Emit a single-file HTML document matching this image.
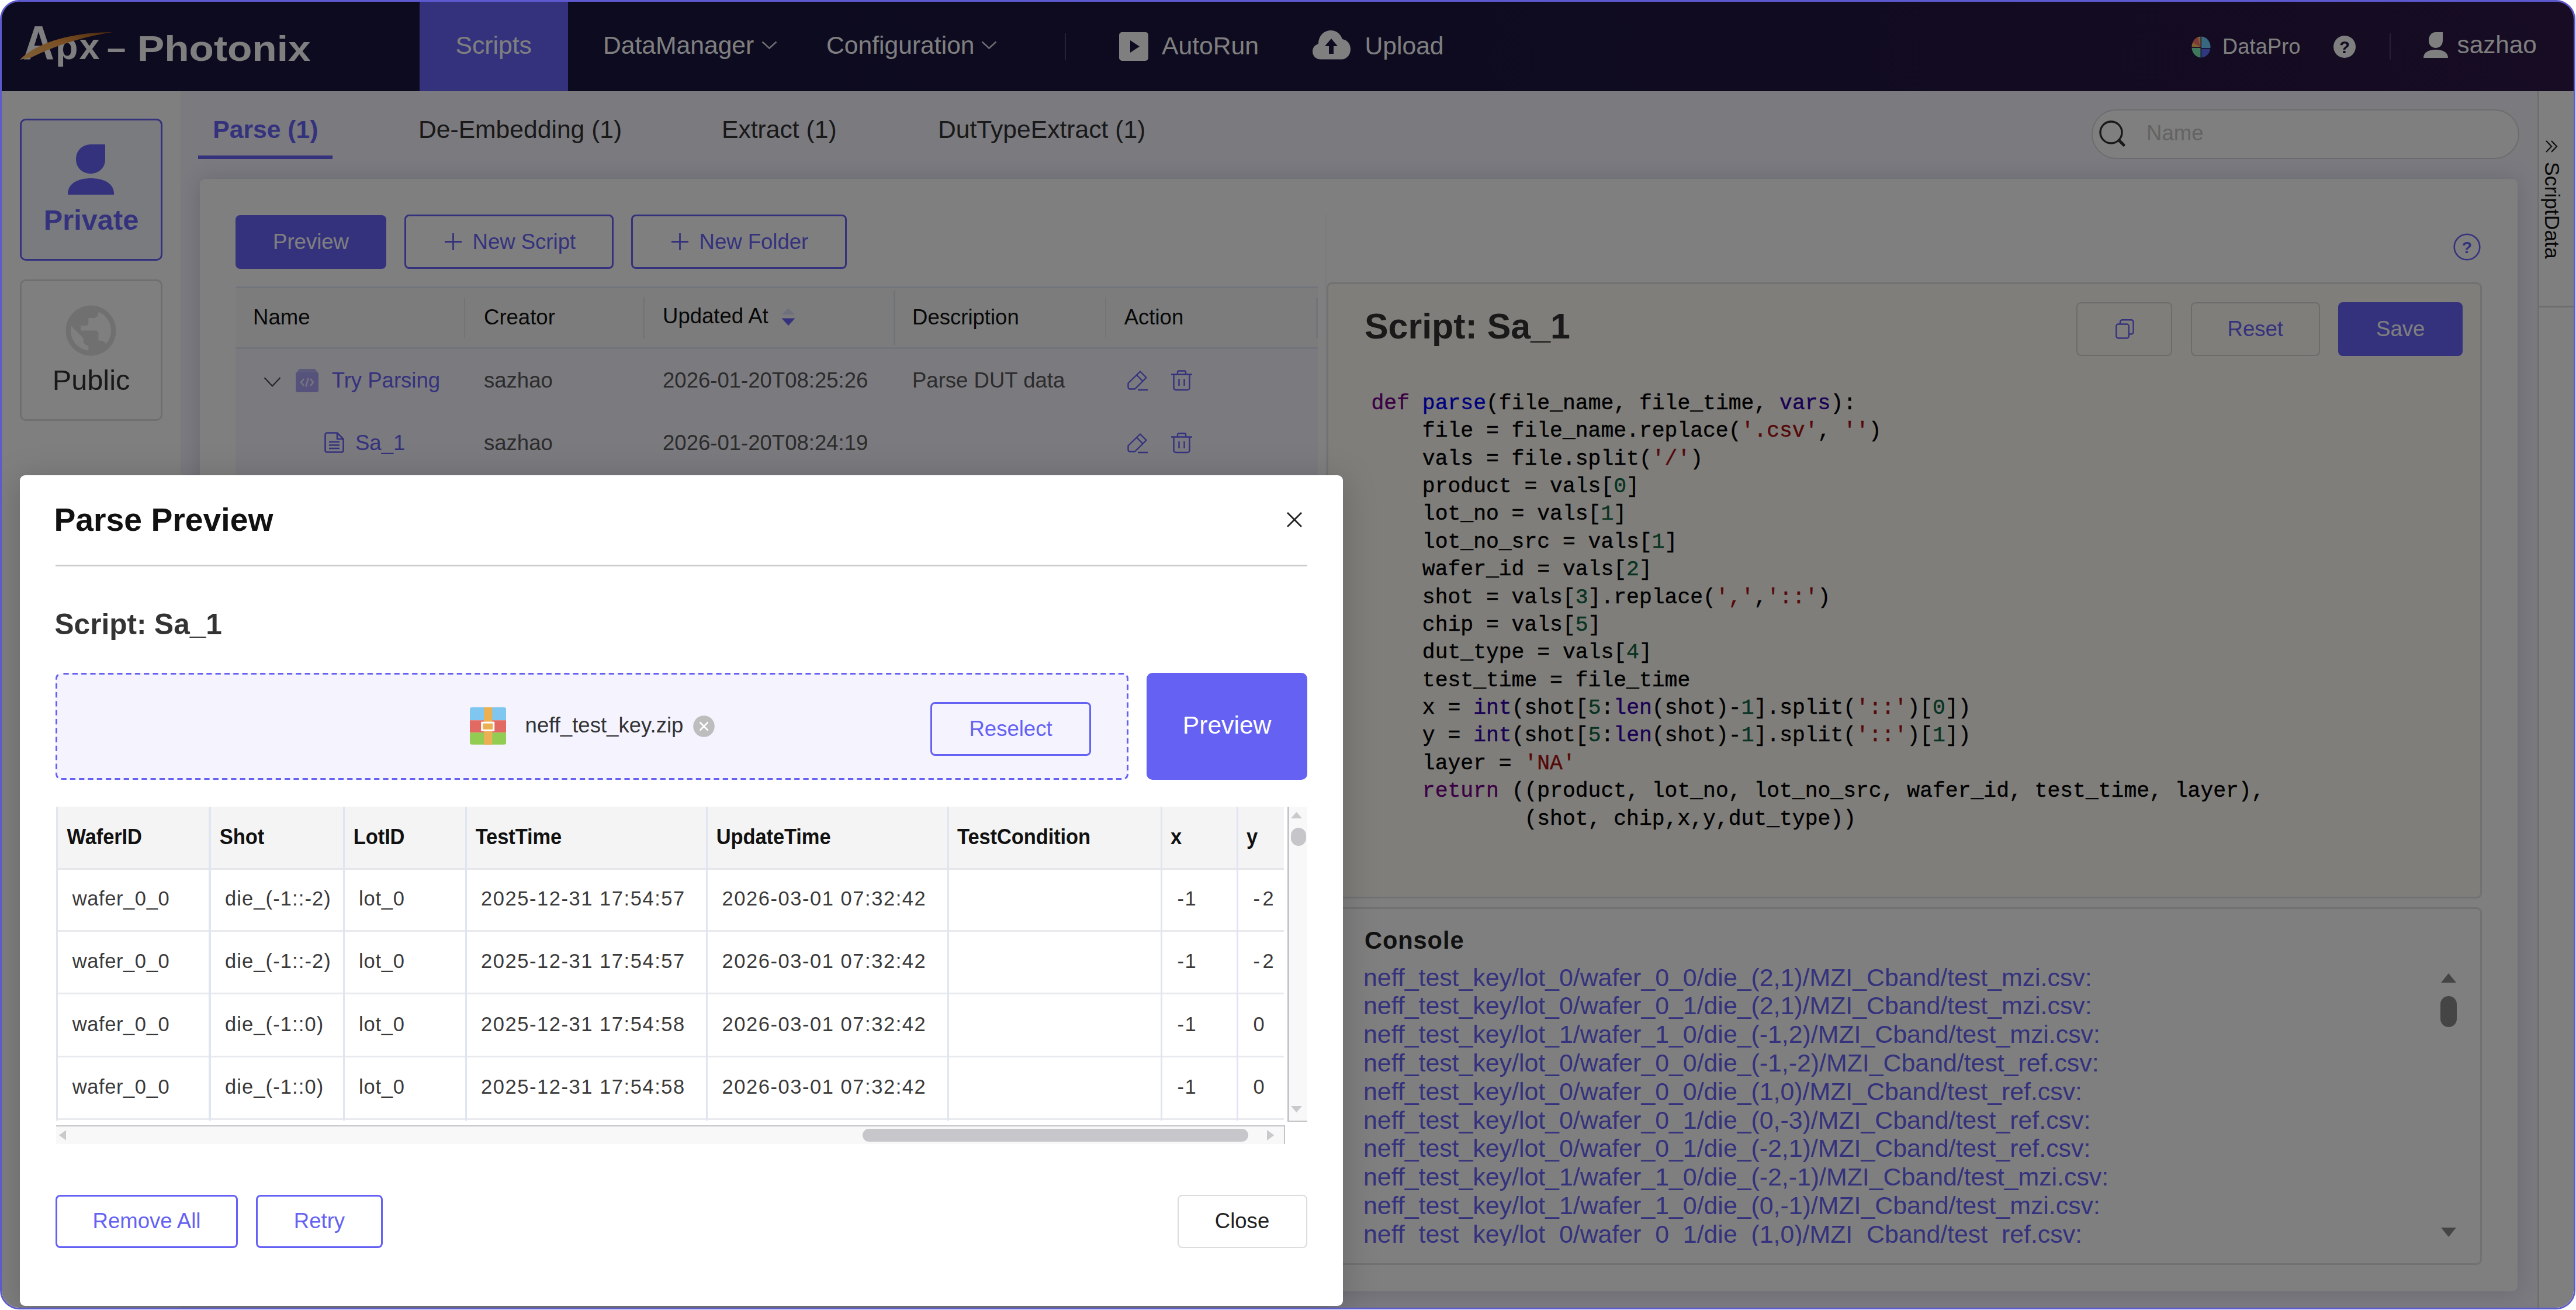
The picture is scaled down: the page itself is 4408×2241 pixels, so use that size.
<!DOCTYPE html>
<html lang="en"><head><meta charset="utf-8"><title>Apx - Photonix | Scripts | Parse Preview</title>
<style>
html,body{margin:0;padding:0;background:#fff;}
body{width:4408px;height:2241px;overflow:hidden;position:relative;font-family:'Liberation Sans', sans-serif;}
#frame{position:absolute;left:0;top:0;width:4406.5px;height:2240px;box-sizing:border-box;border:3px solid #5d59cf;border-radius:33px;overflow:hidden;background:#808080;}
#page,#modal{position:absolute;left:-3px;top:-3px;width:4408px;height:2241px;}
#mask{position:absolute;left:-3px;top:-3px;width:4408px;height:2241px;background:rgba(0,0,0,0.5);}
#page div,#page svg,#modal div,#modal svg{position:absolute;box-sizing:border-box;}
.t{white-space:nowrap;margin:0;}
</style></head><body>
<div id="frame">
<div id="page">
<div style="left:0.00px;top:0.00px;width:4408.00px;height:156.00px;background:linear-gradient(90deg,#1a1640 0%,#1c1642 55%,#2e1846 100%);"></div>
<div class="t" style="left:39.00px;top:25.14px;font-size:81.2px;line-height:97.44px;color:#fff;font-weight:700;font-family:'Liberation Sans', sans-serif;letter-spacing:0;transform:scaleX(0.92);transform-origin:0 0;">A</div>
<div class="t" style="left:95.00px;top:42.44px;font-size:62.93px;line-height:75.52px;color:#fff;font-weight:700;font-family:'Liberation Sans', sans-serif;letter-spacing:2px;">px</div>
<div class="t" style="left:183.00px;top:46.60px;font-size:58px;line-height:69.60px;color:#fff;font-weight:700;font-family:'Liberation Sans', sans-serif;">–</div>
<div class="t" style="left:235.00px;top:45.82px;font-size:62px;line-height:74.40px;color:#fff;font-weight:700;font-family:'Liberation Sans', sans-serif;transform:scaleX(1.118);transform-origin:0 0;">Photonix</div>
<svg style="left:30.00px;top:50.00px;" width="170.00" height="56.00" viewBox="0 0 170 56"><defs><linearGradient id="sw" x1="0" y1="1" x2="1" y2="0"><stop offset="0" stop-color="#ffc070"/><stop offset="0.55" stop-color="#f5a048"/><stop offset="1" stop-color="#9a5218"/></linearGradient></defs><path d="M4 52 C 36 20, 100 5, 163 5 C 108 13, 58 31, 22 49 Z" fill="url(#sw)"/></svg>
<div style="left:718.00px;top:0.00px;width:254.00px;height:156.00px;background:#6a64fb;"></div>
<div class="t" style="left:779.60px;top:52.25px;font-size:42.63px;line-height:51.16px;color:#fff;font-weight:400;font-family:'Liberation Sans', sans-serif;">Scripts</div>
<div class="t" style="left:1032.00px;top:52.25px;font-size:42.63px;line-height:51.16px;color:#fff;font-weight:400;font-family:'Liberation Sans', sans-serif;">DataManager</div>
<svg style="left:1303.00px;top:70.00px;" width="27.00" height="15.00" viewBox="0 0 27 15"><path d="M1.5 1.5 L13.5 12.5 L25.5 1.5" fill="none" stroke="#d8d8e0" stroke-width="2.6"/></svg>
<div class="t" style="left:1414.00px;top:52.25px;font-size:42.63px;line-height:51.16px;color:#fff;font-weight:400;font-family:'Liberation Sans', sans-serif;">Configuration</div>
<svg style="left:1679.00px;top:70.00px;" width="27.00" height="15.00" viewBox="0 0 27 15"><path d="M1.5 1.5 L13.5 12.5 L25.5 1.5" fill="none" stroke="#d8d8e0" stroke-width="2.6"/></svg>
<div style="left:1821.50px;top:56.50px;width:2.50px;height:45.00px;background:#4a4668;"></div>
<svg style="left:1915.00px;top:55.00px;" width="50.00" height="49.00" viewBox="0 0 50 49"><rect x="0" y="0" width="50" height="49" rx="5" fill="#fff"/><path d="M19 14 L35 24.5 L19 35 Z" fill="#1c1642"/></svg>
<div class="t" style="left:1988.00px;top:52.65px;font-size:42.63px;line-height:51.16px;color:#fff;font-weight:400;font-family:'Liberation Sans', sans-serif;">AutoRun</div>
<svg style="left:2246.00px;top:52.00px;" width="65.00" height="50.00" viewBox="0 0 65 50"><path d="M14 49.5 C 5 49.5, 0 43, 0 36 C 0 29, 4.5 24.5, 10 23 C 10 9, 20 0, 31 0 C 41 0, 48 6, 51 15 C 59 16, 65 23, 65 32 C 65 42, 58 49.5, 50 49.5 Z" fill="#fff"/><path d="M32 14 L43 27 L36 27 L36 40 L28 40 L28 27 L21 27 Z" fill="#1c1642"/></svg>
<div class="t" style="left:2335.50px;top:52.65px;font-size:42.63px;line-height:51.16px;color:#fff;font-weight:400;font-family:'Liberation Sans', sans-serif;">Upload</div>
<svg style="left:3750.00px;top:62.00px;" width="33.00" height="37.00" viewBox="0 0 33 37"><clipPath id="dp"><ellipse cx="16.5" cy="18.5" rx="16" ry="18"/></clipPath><g clip-path="url(#dp)"><rect x="0" y="0" width="15.5" height="18.5" fill="#ffc060"/><path d="M0 0 L10 0 L15.5 18.5 L0 9 Z" fill="#ff7070"/><rect x="17" y="0" width="16" height="20" fill="#70d0ff"/><rect x="0" y="20" width="15.5" height="17" fill="#80f0b8"/><rect x="17" y="21.5" width="16" height="16" fill="#5a70ff"/></g></svg>
<div class="t" style="left:3803.00px;top:57.63px;font-size:36px;line-height:43.20px;color:#fff;font-weight:400;font-family:'Liberation Sans', sans-serif;letter-spacing:0.25px;">DataPro</div>
<svg style="left:3993.00px;top:61.00px;" width="38.00" height="38.00" viewBox="0 0 38 38"><circle cx="19" cy="19" r="19" fill="#fff"/></svg>
<div class="t" style="left:4012.00px;transform:translateX(-50%);top:62.88px;font-size:29.5px;line-height:35.40px;color:#1e1842;font-weight:700;font-family:'Liberation Sans', sans-serif;">?</div>
<div style="left:4088.50px;top:56.50px;width:2.50px;height:45.00px;background:#4a4668;"></div>
<svg style="left:4147.00px;top:55.00px;" width="42.00" height="44.00" viewBox="0 0 42 44"><path d="M21 0 L33 0 L33 14 C 33 22, 28 27, 21 27 C 14 27, 9 22, 9 14 C 9 6, 14 0, 21 0 Z" fill="#fff"/><path d="M0 44 C 0 35, 8 30, 21 30 C 34 30, 42 35, 42 44 Z" fill="#fff"/></svg>
<div class="t" style="left:4204.50px;top:52.36px;font-size:42.3px;line-height:50.76px;color:#fff;font-weight:400;font-family:'Liberation Sans', sans-serif;">sazhao</div>
<div style="left:0.00px;top:156.00px;width:4408.00px;height:2090.00px;background:#f5f4ff;"></div>
<div style="left:0.00px;top:156.00px;width:308.50px;height:2090.00px;background:#fff;"></div>
<div style="left:34.00px;top:202.50px;width:243.50px;height:243.00px;border:3px solid #6a64fb;border-radius:10px;background:#f5f6ff;"></div>
<svg style="left:116.00px;top:247.00px;" width="80.00" height="86.00" viewBox="0 0 80 86"><path d="M39 0 L64 0 L64 26 C 64 40, 53 50, 39 50 C 25 50, 14 40, 14 25 C 14 11, 25 0, 39 0 Z" fill="#6a64fb"/><path d="M0 86 L0 82 C 2 66, 18 58, 39.5 58 C 61 58, 77 66, 79 82 L79 86 Z" fill="#6a64fb"/></svg>
<div class="t" style="left:156.00px;transform:translateX(-50%);top:346.59px;font-size:48.72px;line-height:58.46px;color:#6a64fb;font-weight:700;font-family:'Liberation Sans', sans-serif;">Private</div>
<div style="left:34.00px;top:478.00px;width:243.50px;height:242.00px;border:3px solid #dedede;border-radius:10px;background:#fff;"></div>
<svg style="left:104.40px;top:514.40px;" width="103.20" height="103.20" viewBox="0 0 24 24"><path fill="#e0e0e0" d="M12 2C6.48 2 2 6.48 2 12s4.48 10 10 10 10-4.48 10-10S17.52 2 12 2zm-1 17.93c-3.95-.49-7-3.85-7-7.93 0-.62.08-1.21.21-1.79L9 15v1c0 1.1.9 2 2 2v1.93zm6.9-2.54c-.26-.81-1-1.39-1.9-1.39h-1v-3c0-.55-.45-1-1-1H8v-2h2c.55 0 1-.45 1-1V7h2c1.1 0 2-.9 2-2v-.41c2.93 1.19 5 4.06 5 7.41 0 2.08-.8 3.97-2.1 5.39z"/></svg>
<div class="t" style="left:156.00px;transform:translateX(-50%);top:620.89px;font-size:48.72px;line-height:58.46px;color:#333;font-weight:400;font-family:'Liberation Sans', sans-serif;">Public</div>
<div style="left:4342.00px;top:156.00px;width:70.00px;height:2090.00px;background:#fff;"></div>
<div style="left:4342.00px;top:156.00px;width:3.00px;height:2090.00px;background:#dcdcdc;"></div>
<div style="left:4345.00px;top:522.50px;width:60.00px;height:3.00px;background:#dcdcdc;"></div>
<svg style="left:4355.00px;top:239.00px;" width="23.00" height="23.00" viewBox="0 0 23 23"><path d="M2 2 L11 11.5 L2 21 M11 2 L20 11.5 L11 21" fill="none" stroke="#222" stroke-width="2.2"/></svg>
<div class="t" style="left:4349px;top:277px;font-size:35.5px;line-height:36px;color:#111;font-family:'Liberation Sans', sans-serif;writing-mode:vertical-rl;">ScriptData</div>
<div class="t" style="left:364.30px;top:196.35px;font-size:42.63px;line-height:51.16px;color:#6a64fb;font-weight:700;font-family:'Liberation Sans', sans-serif;">Parse (1)</div>
<div style="left:339.00px;top:265.80px;width:229.50px;height:6.20px;background:#6a64fb;"></div>
<div class="t" style="left:716.00px;top:195.65px;font-size:42.63px;line-height:51.16px;color:#333;font-weight:400;font-family:'Liberation Sans', sans-serif;">De-Embedding (1)</div>
<div class="t" style="left:1235.00px;top:195.65px;font-size:42.63px;line-height:51.16px;color:#333;font-weight:400;font-family:'Liberation Sans', sans-serif;">Extract (1)</div>
<div class="t" style="left:1605.00px;top:195.65px;font-size:42.63px;line-height:51.16px;color:#333;font-weight:400;font-family:'Liberation Sans', sans-serif;">DutTypeExtract (1)</div>
<div style="left:3579.00px;top:186.50px;width:732.00px;height:85.00px;border:2.5px solid #d9d9d9;border-radius:43px;background:#fff;"></div>
<svg style="left:3592.00px;top:206.00px;" width="46.00" height="46.00" viewBox="0 0 46 46"><circle cx="20.5" cy="20.5" r="18.5" fill="none" stroke="#333" stroke-width="3.4"/><path d="M34 34 L42 42" stroke="#333" stroke-width="5" stroke-linecap="round"/></svg>
<div class="t" style="left:3673.00px;top:206.41px;font-size:36.54px;line-height:43.85px;color:#c6c6c6;font-weight:400;font-family:'Liberation Sans', sans-serif;">Name</div>
<div style="left:342.00px;top:306.00px;width:3966.00px;height:1903.00px;background:#fff;border-radius:9px;box-shadow:0 0 36px rgba(40,40,80,0.16);"></div>
<div style="left:403.00px;top:368.30px;width:258.00px;height:91.40px;background:#6a64fb;border-radius:8px;"></div>
<div class="t" style="left:532.00px;transform:translateX(-50%);top:391.91px;font-size:36.54px;line-height:43.85px;color:#fff;font-weight:400;font-family:'Liberation Sans', sans-serif;">Preview</div>
<div style="left:692.00px;top:367.00px;width:358.00px;height:93.00px;border:3px solid #6a64fb;border-radius:8px;background:#fff;"></div>
<svg style="left:761.00px;top:399.00px;" width="29.00" height="29.00" viewBox="0 0 29 29"><path d="M14.5 0 V29 M0 14.5 H29" stroke="#6a64fb" stroke-width="2.8"/></svg>
<div class="t" style="left:808.50px;top:391.91px;font-size:36.54px;line-height:43.85px;color:#6a64fb;font-weight:400;font-family:'Liberation Sans', sans-serif;">New Script</div>
<div style="left:1080.00px;top:367.00px;width:368.50px;height:93.00px;border:3px solid #6a64fb;border-radius:8px;background:#fff;"></div>
<svg style="left:1149.00px;top:399.00px;" width="29.00" height="29.00" viewBox="0 0 29 29"><path d="M14.5 0 V29 M0 14.5 H29" stroke="#6a64fb" stroke-width="2.8"/></svg>
<div class="t" style="left:1196.50px;top:391.91px;font-size:36.54px;line-height:43.85px;color:#6a64fb;font-weight:400;font-family:'Liberation Sans', sans-serif;">New Folder</div>
<div style="left:403.00px;top:490.00px;width:1851.50px;height:106.50px;background:#f9f9f9;border-top:3.2px solid #e3ebf7;border-bottom:3.2px solid #e3ebf7;"></div>
<div style="left:403.00px;top:596.50px;width:1851.50px;height:216.00px;background:#f6f5ff;"></div>
<div style="left:793.80px;top:509.00px;width:2.60px;height:70.00px;background:#e4e8f0;"></div>
<div style="left:1100.30px;top:509.00px;width:2.60px;height:70.00px;background:#e4e8f0;"></div>
<div style="left:1528.80px;top:497.00px;width:2.80px;height:93.00px;background:#e0e5ee;"></div>
<div style="left:1890.80px;top:509.00px;width:2.60px;height:70.00px;background:#e4e8f0;"></div>
<div style="left:2252.30px;top:509.00px;width:2.60px;height:70.00px;background:#e4e8f0;"></div>
<div class="t" style="left:433.00px;top:521.01px;font-size:36.54px;line-height:43.85px;color:#111;font-weight:400;font-family:'Liberation Sans', sans-serif;">Name</div>
<div class="t" style="left:828.00px;top:521.01px;font-size:36.54px;line-height:43.85px;color:#111;font-weight:400;font-family:'Liberation Sans', sans-serif;">Creator</div>
<div class="t" style="left:1134.00px;top:519.01px;font-size:36.54px;line-height:43.85px;color:#111;font-weight:400;font-family:'Liberation Sans', sans-serif;">Updated At</div>
<svg style="left:1336.50px;top:526.50px;" width="24.00" height="30.00" viewBox="0 0 24 30"><path d="M12 0 L23.5 11.5 L0.5 11.5 Z" fill="#dde3fa"/><path d="M12 30 L23.5 17.5 L0.5 17.5 Z" fill="#6a64fb"/></svg>
<div class="t" style="left:1561.00px;top:521.01px;font-size:36.54px;line-height:43.85px;color:#111;font-weight:400;font-family:'Liberation Sans', sans-serif;">Description</div>
<div class="t" style="left:1923.70px;top:521.01px;font-size:36.54px;line-height:43.85px;color:#111;font-weight:400;font-family:'Liberation Sans', sans-serif;">Action</div>
<svg style="left:451.00px;top:644.00px;" width="30.00" height="20.00" viewBox="0 0 30 20"><path d="M1.5 2 L15 16.5 L28.5 2" fill="none" stroke="#4a4a4a" stroke-width="2.2"/></svg>
<svg style="left:506.00px;top:631.00px;" width="39.00" height="40.00" viewBox="0 0 39 40"><path d="M6 0 H33 L39 8 H0 Z" fill="#b8b5f6"/><rect x="0" y="6" width="39" height="34" rx="3" fill="#aaa6f8"/><path d="M14 17 L9 23 L14 29 M25 17 L30 23 L25 29 M21.5 15.5 L17.5 30.5" fill="none" stroke="#f0efff" stroke-width="2.4"/></svg>
<div class="t" style="left:567.70px;top:629.41px;font-size:36.54px;line-height:43.85px;color:#6a64fb;font-weight:400;font-family:'Liberation Sans', sans-serif;">Try Parsing</div>
<div class="t" style="left:828.00px;top:629.41px;font-size:36.54px;line-height:43.85px;color:#595959;font-weight:400;font-family:'Liberation Sans', sans-serif;">sazhao</div>
<div class="t" style="left:1134.00px;top:629.41px;font-size:36.54px;line-height:43.85px;color:#595959;font-weight:400;font-family:'Liberation Sans', sans-serif;">2026-01-20T08:25:26</div>
<div class="t" style="left:1561.00px;top:629.41px;font-size:36.54px;line-height:43.85px;color:#595959;font-weight:400;font-family:'Liberation Sans', sans-serif;">Parse DUT data</div>
<svg style="left:1927.50px;top:633.00px;" width="38.00" height="36.00" viewBox="0 0 38 36"><path d="M23 2.5 L33.5 13 L14 32.5 H5.5 a3 3 0 0 1 -3 -3 V22.5 Z M17 8.5 L27.5 19 M19 34 H36" fill="none" stroke="#6a64fb" stroke-width="2.4" stroke-linejoin="round"/></svg>
<svg style="left:2002.50px;top:633.00px;" width="38.00" height="36.00" viewBox="0 0 38 36"><path d="M1 7.5 H37 M12 7 V3.5 a2 2 0 0 1 2 -2 H24 a2 2 0 0 1 2 2 V7 M5.5 8 V30.5 a3.5 3.5 0 0 0 3.5 3.5 H29 a3.5 3.5 0 0 0 3.5 -3.5 V8 M14.5 15 V27 M23.5 15 V27" fill="none" stroke="#6a64fb" stroke-width="2.4"/></svg>
<svg style="left:555.00px;top:738.50px;" width="34.00" height="36.00" viewBox="0 0 34 36"><path d="M1.5 4.5 a3 3 0 0 1 3 -3 H22 L32.5 12 V31.5 a3 3 0 0 1 -3 3 H4.5 a3 3 0 0 1 -3 -3 Z M22 1.5 V12 H32.5 M8 17 H26 M8 22.5 H26 M8 28 H26" fill="none" stroke="#6a64fb" stroke-width="2.6" stroke-linejoin="round"/></svg>
<div class="t" style="left:608.00px;top:735.91px;font-size:36.54px;line-height:43.85px;color:#6a64fb;font-weight:400;font-family:'Liberation Sans', sans-serif;">Sa_1</div>
<div class="t" style="left:828.00px;top:735.91px;font-size:36.54px;line-height:43.85px;color:#595959;font-weight:400;font-family:'Liberation Sans', sans-serif;">sazhao</div>
<div class="t" style="left:1134.00px;top:735.91px;font-size:36.54px;line-height:43.85px;color:#595959;font-weight:400;font-family:'Liberation Sans', sans-serif;">2026-01-20T08:24:19</div>
<svg style="left:1927.50px;top:740.00px;" width="38.00" height="36.00" viewBox="0 0 38 36"><path d="M23 2.5 L33.5 13 L14 32.5 H5.5 a3 3 0 0 1 -3 -3 V22.5 Z M17 8.5 L27.5 19 M19 34 H36" fill="none" stroke="#6a64fb" stroke-width="2.4" stroke-linejoin="round"/></svg>
<svg style="left:2002.50px;top:740.00px;" width="38.00" height="36.00" viewBox="0 0 38 36"><path d="M1 7.5 H37 M12 7 V3.5 a2 2 0 0 1 2 -2 H24 a2 2 0 0 1 2 2 V7 M5.5 8 V30.5 a3.5 3.5 0 0 0 3.5 3.5 H29 a3.5 3.5 0 0 0 3.5 -3.5 V8 M14.5 15 V27 M23.5 15 V27" fill="none" stroke="#6a64fb" stroke-width="2.4"/></svg>
<div style="left:2267.00px;top:366.00px;width:3.00px;height:1800.00px;background:#f6f8fc;"></div>
<svg style="left:4198.00px;top:399.00px;" width="47.00" height="47.00" viewBox="0 0 47 47"><circle cx="23.5" cy="23.5" r="21.8" fill="none" stroke="#6a64fb" stroke-width="2.6"/></svg>
<div class="t" style="left:4221.50px;transform:translateX(-50%);top:405.60px;font-size:28.42px;line-height:34.10px;color:#6a64fb;font-weight:700;font-family:'Liberation Sans', sans-serif;">?</div>
<div style="left:2270.00px;top:483.00px;width:1976.50px;height:1053.50px;border:3px solid #e2e2e2;border-radius:9px;background:#fffdf6;"></div>
<div class="t" style="left:2335.00px;top:522.36px;font-size:60.9px;line-height:73.08px;color:#333;font-weight:700;font-family:'Liberation Sans', sans-serif;">Script: Sa_1</div>
<div style="left:3553.00px;top:517.00px;width:163.50px;height:92.00px;border:2.6px solid #d9d9d9;border-radius:8px;"></div>
<svg style="left:3620.00px;top:546.00px;" width="32.00" height="34.00" viewBox="0 0 32 34"><rect x="1.3" y="8.5" width="21.5" height="24" rx="3.5" fill="none" stroke="#6a64fb" stroke-width="2.4"/><path d="M8 8 V4.8 a3.5 3.5 0 0 1 3.5 -3.5 H27 a3.5 3.5 0 0 1 3.5 3.5 V22 a3.5 3.5 0 0 1 -3.5 3.5 H23.5" fill="none" stroke="#6a64fb" stroke-width="2.4"/></svg>
<div style="left:3748.50px;top:517.00px;width:221.50px;height:92.00px;border:2.6px solid #d9d9d9;border-radius:8px;"></div>
<div class="t" style="left:3859.30px;transform:translateX(-50%);top:541.41px;font-size:36.54px;line-height:43.85px;color:#6a64fb;font-weight:400;font-family:'Liberation Sans', sans-serif;">Reset</div>
<div style="left:4001.00px;top:517.00px;width:213.00px;height:92.00px;background:#6a64fb;border-radius:8px;"></div>
<div class="t" style="left:4107.70px;transform:translateX(-50%);top:541.41px;font-size:36.54px;line-height:43.85px;color:#fff;font-weight:400;font-family:'Liberation Sans', sans-serif;">Save</div>
<div class="t" style="left:2346.50px;top:668.77px;font-size:36.39px;line-height:43.67px;color:#000;font-weight:400;font-family:'Liberation Mono', monospace;white-space:pre;-webkit-text-stroke:0.45px;"><span style="color:#770088">def</span> <span style="color:#0000ff">parse</span>(file_name, file_time, <span style="color:#3300aa">vars</span>):</div>
<div class="t" style="left:2346.50px;top:716.16px;font-size:36.39px;line-height:43.67px;color:#000;font-weight:400;font-family:'Liberation Mono', monospace;white-space:pre;-webkit-text-stroke:0.45px;">    file = file_name.replace(<span style="color:#aa1111">'.csv'</span>, <span style="color:#aa1111">''</span>)</div>
<div class="t" style="left:2346.50px;top:763.55px;font-size:36.39px;line-height:43.67px;color:#000;font-weight:400;font-family:'Liberation Mono', monospace;white-space:pre;-webkit-text-stroke:0.45px;">    vals = file.split(<span style="color:#aa1111">'/'</span>)</div>
<div class="t" style="left:2346.50px;top:810.94px;font-size:36.39px;line-height:43.67px;color:#000;font-weight:400;font-family:'Liberation Mono', monospace;white-space:pre;-webkit-text-stroke:0.45px;">    product = vals[<span style="color:#116644">0</span>]</div>
<div class="t" style="left:2346.50px;top:858.33px;font-size:36.39px;line-height:43.67px;color:#000;font-weight:400;font-family:'Liberation Mono', monospace;white-space:pre;-webkit-text-stroke:0.45px;">    lot_no = vals[<span style="color:#116644">1</span>]</div>
<div class="t" style="left:2346.50px;top:905.72px;font-size:36.39px;line-height:43.67px;color:#000;font-weight:400;font-family:'Liberation Mono', monospace;white-space:pre;-webkit-text-stroke:0.45px;">    lot_no_src = vals[<span style="color:#116644">1</span>]</div>
<div class="t" style="left:2346.50px;top:953.11px;font-size:36.39px;line-height:43.67px;color:#000;font-weight:400;font-family:'Liberation Mono', monospace;white-space:pre;-webkit-text-stroke:0.45px;">    wafer_id = vals[<span style="color:#116644">2</span>]</div>
<div class="t" style="left:2346.50px;top:1000.50px;font-size:36.39px;line-height:43.67px;color:#000;font-weight:400;font-family:'Liberation Mono', monospace;white-space:pre;-webkit-text-stroke:0.45px;">    shot = vals[<span style="color:#116644">3</span>].replace(<span style="color:#aa1111">','</span>,<span style="color:#aa1111">'::'</span>)</div>
<div class="t" style="left:2346.50px;top:1047.89px;font-size:36.39px;line-height:43.67px;color:#000;font-weight:400;font-family:'Liberation Mono', monospace;white-space:pre;-webkit-text-stroke:0.45px;">    chip = vals[<span style="color:#116644">5</span>]</div>
<div class="t" style="left:2346.50px;top:1095.28px;font-size:36.39px;line-height:43.67px;color:#000;font-weight:400;font-family:'Liberation Mono', monospace;white-space:pre;-webkit-text-stroke:0.45px;">    dut_type = vals[<span style="color:#116644">4</span>]</div>
<div class="t" style="left:2346.50px;top:1142.67px;font-size:36.39px;line-height:43.67px;color:#000;font-weight:400;font-family:'Liberation Mono', monospace;white-space:pre;-webkit-text-stroke:0.45px;">    test_time = file_time</div>
<div class="t" style="left:2346.50px;top:1190.06px;font-size:36.39px;line-height:43.67px;color:#000;font-weight:400;font-family:'Liberation Mono', monospace;white-space:pre;-webkit-text-stroke:0.45px;">    x = <span style="color:#3300aa">int</span>(shot[<span style="color:#116644">5</span>:<span style="color:#3300aa">len</span>(shot)-<span style="color:#116644">1</span>].split(<span style="color:#aa1111">'::'</span>)[<span style="color:#116644">0</span>])</div>
<div class="t" style="left:2346.50px;top:1237.45px;font-size:36.39px;line-height:43.67px;color:#000;font-weight:400;font-family:'Liberation Mono', monospace;white-space:pre;-webkit-text-stroke:0.45px;">    y = <span style="color:#3300aa">int</span>(shot[<span style="color:#116644">5</span>:<span style="color:#3300aa">len</span>(shot)-<span style="color:#116644">1</span>].split(<span style="color:#aa1111">'::'</span>)[<span style="color:#116644">1</span>])</div>
<div class="t" style="left:2346.50px;top:1284.84px;font-size:36.39px;line-height:43.67px;color:#000;font-weight:400;font-family:'Liberation Mono', monospace;white-space:pre;-webkit-text-stroke:0.45px;">    layer = <span style="color:#aa1111">'NA'</span></div>
<div class="t" style="left:2346.50px;top:1332.23px;font-size:36.39px;line-height:43.67px;color:#000;font-weight:400;font-family:'Liberation Mono', monospace;white-space:pre;-webkit-text-stroke:0.45px;">    <span style="color:#770088">return</span> ((product, lot_no, lot_no_src, wafer_id, test_time, layer),</div>
<div class="t" style="left:2346.50px;top:1379.62px;font-size:36.39px;line-height:43.67px;color:#000;font-weight:400;font-family:'Liberation Mono', monospace;white-space:pre;-webkit-text-stroke:0.45px;">            (shot, chip,x,y,dut_type))</div>
<div style="left:2270.00px;top:1552.00px;width:1976.50px;height:611.50px;border:3px solid #e2e2e2;border-radius:9px;background:#fff;"></div>
<div class="t" style="left:2335.00px;top:1584.12px;font-size:41.61px;line-height:49.93px;color:#222;font-weight:700;font-family:'Liberation Sans', sans-serif;letter-spacing:0.9px;">Console</div>
<div style="left:2300px;top:1640px;width:1900px;height:491px;overflow:hidden;">
<div class="t" style="left:33.00px;top:6.66px;font-size:42.83px;line-height:51.40px;color:#6a64fb;font-weight:400;font-family:'Liberation Sans', sans-serif;">neff_test_key/lot_0/wafer_0_0/die_(2,1)/MZI_Cband/test_mzi.csv:</div>
<div class="t" style="left:33.00px;top:55.44px;font-size:42.83px;line-height:51.40px;color:#6a64fb;font-weight:400;font-family:'Liberation Sans', sans-serif;">neff_test_key/lot_0/wafer_0_1/die_(2,1)/MZI_Cband/test_mzi.csv:</div>
<div class="t" style="left:33.00px;top:104.22px;font-size:42.83px;line-height:51.40px;color:#6a64fb;font-weight:400;font-family:'Liberation Sans', sans-serif;">neff_test_key/lot_1/wafer_1_0/die_(-1,2)/MZI_Cband/test_mzi.csv:</div>
<div class="t" style="left:33.00px;top:153.00px;font-size:42.83px;line-height:51.40px;color:#6a64fb;font-weight:400;font-family:'Liberation Sans', sans-serif;">neff_test_key/lot_0/wafer_0_0/die_(-1,-2)/MZI_Cband/test_ref.csv:</div>
<div class="t" style="left:33.00px;top:201.78px;font-size:42.83px;line-height:51.40px;color:#6a64fb;font-weight:400;font-family:'Liberation Sans', sans-serif;">neff_test_key/lot_0/wafer_0_0/die_(1,0)/MZI_Cband/test_ref.csv:</div>
<div class="t" style="left:33.00px;top:250.56px;font-size:42.83px;line-height:51.40px;color:#6a64fb;font-weight:400;font-family:'Liberation Sans', sans-serif;">neff_test_key/lot_0/wafer_0_1/die_(0,-3)/MZI_Cband/test_ref.csv:</div>
<div class="t" style="left:33.00px;top:299.34px;font-size:42.83px;line-height:51.40px;color:#6a64fb;font-weight:400;font-family:'Liberation Sans', sans-serif;">neff_test_key/lot_0/wafer_0_1/die_(-2,1)/MZI_Cband/test_ref.csv:</div>
<div class="t" style="left:33.00px;top:348.12px;font-size:42.83px;line-height:51.40px;color:#6a64fb;font-weight:400;font-family:'Liberation Sans', sans-serif;">neff_test_key/lot_1/wafer_1_0/die_(-2,-1)/MZI_Cband/test_mzi.csv:</div>
<div class="t" style="left:33.00px;top:396.90px;font-size:42.83px;line-height:51.40px;color:#6a64fb;font-weight:400;font-family:'Liberation Sans', sans-serif;">neff_test_key/lot_1/wafer_1_0/die_(0,-1)/MZI_Cband/test_mzi.csv:</div>
<div class="t" style="left:33.00px;top:445.68px;font-size:42.83px;line-height:51.40px;color:#6a64fb;font-weight:400;font-family:'Liberation Sans', sans-serif;">neff_test_key/lot_0/wafer_0_1/die_(1,0)/MZI_Cband/test_ref.csv:</div>
</div>
<svg style="left:4176.00px;top:1664.00px;" width="28.00" height="18.00" viewBox="0 0 28 18"><path d="M14 1 L27 17 H1 Z" fill="#8a8a8a"/></svg>
<div style="left:4176.00px;top:1704.00px;width:28.00px;height:53.00px;background:#8a8a8a;border-radius:14px;"></div>
<svg style="left:4176.00px;top:2099.00px;" width="28.00" height="18.00" viewBox="0 0 28 18"><path d="M14 17 L27 1 H1 Z" fill="#8a8a8a"/></svg>
</div>
<div id="mask"></div>
<div id="modal">
<div style="left:34.00px;top:812.50px;width:2263.50px;height:1421.00px;background:#fff;border-radius:9px;box-shadow:0 8px 56px 4px rgba(0,0,0,0.17);"></div>
<div class="t" style="left:92.40px;top:855.96px;font-size:55.3px;line-height:66.36px;color:#111;font-weight:700;font-family:'Liberation Sans', sans-serif;">Parse Preview</div>
<svg style="left:2201.00px;top:875.00px;" width="28.00" height="28.00" viewBox="0 0 28 28"><path d="M2 2 L26 26 M26 2 L2 26" stroke="#222" stroke-width="2.8"/></svg>
<div style="left:95.30px;top:966.00px;width:2142.00px;height:3.40px;background:#cfcfcf;"></div>
<div class="t" style="left:93.60px;top:1038.05px;font-size:49.5px;line-height:59.40px;color:#333;font-weight:700;font-family:'Liberation Sans', sans-serif;">Script: Sa_1</div>
<div style="left:95.00px;top:1151.00px;width:1836.00px;height:183.00px;background:#f4f3fe;border-radius:9px;"></div>
<svg style="left:95.00px;top:1151.00px;" width="1836.00" height="183.00" viewBox="0 0 1836 183"><rect x="1.5" y="1.5" width="1833" height="180" rx="8" fill="none" stroke="#6562f3" stroke-width="3" stroke-dasharray="9.2 6.1" stroke-dashoffset="-4"/></svg>
<svg style="left:804.20px;top:1209.90px;" width="62.20" height="63.80" viewBox="0 0 62.2 63.8"><clipPath id="zc"><rect x="0" y="0" width="62.2" height="63.8" rx="3.5"/></clipPath><g clip-path="url(#zc)"><rect x="0" y="0" width="62.2" height="22.2" fill="#7fc7f1"/><rect x="0" y="22.2" width="62.2" height="21" fill="#e26a63"/><rect x="0" y="43.2" width="62.2" height="21" fill="#93cc52"/><rect x="24.1" y="0" width="14.3" height="64" fill="#ecb054"/><rect x="20.7" y="26.1" width="20" height="13.2" fill="#ecb054" stroke="#fff" stroke-width="3"/></g></svg>
<div class="t" style="left:898.60px;top:1219.31px;font-size:36.54px;line-height:43.85px;color:#333;font-weight:400;font-family:'Liberation Sans', sans-serif;">neff_test_key.zip</div>
<svg style="left:1185.50px;top:1223.80px;" width="37.00" height="37.00" viewBox="0 0 37 37"><circle cx="18.5" cy="18.5" r="18.3" fill="#bdbdbd"/><path d="M11.5 11.5 L25.5 25.5 M25.5 11.5 L11.5 25.5" stroke="#fff" stroke-width="2.6"/></svg>
<div style="left:1592.00px;top:1201.00px;width:275.00px;height:92.00px;border:3px solid #6562f3;border-radius:8px;"></div>
<div class="t" style="left:1729.50px;transform:translateX(-50%);top:1224.71px;font-size:36.54px;line-height:43.85px;color:#6562f3;font-weight:400;font-family:'Liberation Sans', sans-serif;">Reselect</div>
<div style="left:1962.00px;top:1150.70px;width:275.20px;height:183.00px;background:#6562f3;border-radius:10px;"></div>
<div class="t" style="left:2099.60px;transform:translateX(-50%);top:1215.05px;font-size:42.63px;line-height:51.16px;color:#fff;font-weight:400;font-family:'Liberation Sans', sans-serif;">Preview</div>
<div style="left:95.8px;top:1380.2px;width:2100.8999999999996px;height:537.3px;overflow:hidden;background:#fff;">
<div style="left:0.00px;top:0.00px;width:2100.90px;height:106.00px;background:#f4f4f4;"></div>
<div style="left:0.00px;top:104.40px;width:2100.90px;height:3.20px;background:#e6e7eb;"></div>
<div style="left:0.00px;top:210.80px;width:2100.90px;height:3.00px;background:#e9eaee;"></div>
<div style="left:0.00px;top:318.17px;width:2100.90px;height:3.00px;background:#e9eaee;"></div>
<div style="left:0.00px;top:425.54px;width:2100.90px;height:3.00px;background:#e9eaee;"></div>
<div style="left:0.00px;top:532.91px;width:2100.90px;height:3.00px;background:#e9eaee;"></div>
<div style="left:0.00px;top:640.28px;width:2100.90px;height:3.00px;background:#e9eaee;"></div>
<div style="left:0.00px;top:0.00px;width:3.20px;height:560.00px;background:#dfe5f1;"></div>
<div style="left:261.70px;top:0.00px;width:3.20px;height:560.00px;background:#dfe5f1;"></div>
<div style="left:491.20px;top:0.00px;width:3.20px;height:560.00px;background:#dfe5f1;"></div>
<div style="left:700.20px;top:0.00px;width:3.20px;height:560.00px;background:#dfe5f1;"></div>
<div style="left:1112.20px;top:0.00px;width:3.20px;height:560.00px;background:#dfe5f1;"></div>
<div style="left:1525.20px;top:0.00px;width:3.20px;height:560.00px;background:#dfe5f1;"></div>
<div style="left:1890.20px;top:0.00px;width:3.20px;height:560.00px;background:#dfe5f1;"></div>
<div style="left:2020.20px;top:0.00px;width:3.20px;height:560.00px;background:#dfe5f1;"></div>
<div class="t" style="left:18.70px;top:32.14px;font-size:34.51px;line-height:41.41px;color:#111;font-weight:700;font-family:'Liberation Sans', sans-serif;letter-spacing:-0.1px;transform:scaleY(1.06);transform-origin:0 32.5px;">WaferID</div>
<div class="t" style="left:280.00px;top:32.14px;font-size:34.51px;line-height:41.41px;color:#111;font-weight:700;font-family:'Liberation Sans', sans-serif;letter-spacing:-0.1px;transform:scaleY(1.06);transform-origin:0 32.5px;">Shot</div>
<div class="t" style="left:509.00px;top:32.14px;font-size:34.51px;line-height:41.41px;color:#111;font-weight:700;font-family:'Liberation Sans', sans-serif;letter-spacing:-0.1px;transform:scaleY(1.06);transform-origin:0 32.5px;">LotID</div>
<div class="t" style="left:717.90px;top:32.14px;font-size:34.51px;line-height:41.41px;color:#111;font-weight:700;font-family:'Liberation Sans', sans-serif;letter-spacing:-0.1px;transform:scaleY(1.06);transform-origin:0 32.5px;">TestTime</div>
<div class="t" style="left:1129.90px;top:32.14px;font-size:34.51px;line-height:41.41px;color:#111;font-weight:700;font-family:'Liberation Sans', sans-serif;letter-spacing:-0.1px;transform:scaleY(1.06);transform-origin:0 32.5px;">UpdateTime</div>
<div class="t" style="left:1542.20px;top:32.14px;font-size:34.51px;line-height:41.41px;color:#111;font-weight:700;font-family:'Liberation Sans', sans-serif;letter-spacing:-0.1px;transform:scaleY(1.06);transform-origin:0 32.5px;">TestCondition</div>
<div class="t" style="left:1907.20px;top:32.14px;font-size:34.51px;line-height:41.41px;color:#111;font-weight:700;font-family:'Liberation Sans', sans-serif;letter-spacing:-0.1px;transform:scaleY(1.06);transform-origin:0 32.5px;">x</div>
<div class="t" style="left:2037.20px;top:32.14px;font-size:34.51px;line-height:41.41px;color:#111;font-weight:700;font-family:'Liberation Sans', sans-serif;letter-spacing:-0.1px;transform:scaleY(1.06);transform-origin:0 32.5px;">y</div>
<div class="t" style="left:27.90px;top:136.94px;font-size:34.51px;line-height:41.41px;color:#3a3a3a;font-weight:400;font-family:'Liberation Sans', sans-serif;letter-spacing:0.6px;">wafer_0_0</div>
<div class="t" style="left:289.20px;top:136.94px;font-size:34.51px;line-height:41.41px;color:#3a3a3a;font-weight:400;font-family:'Liberation Sans', sans-serif;letter-spacing:1.1px;">die_(-1::-2)</div>
<div class="t" style="left:518.20px;top:136.94px;font-size:34.51px;line-height:41.41px;color:#3a3a3a;font-weight:400;font-family:'Liberation Sans', sans-serif;letter-spacing:0.8px;">lot_0</div>
<div class="t" style="left:727.20px;top:136.94px;font-size:34.51px;line-height:41.41px;color:#3a3a3a;font-weight:400;font-family:'Liberation Sans', sans-serif;letter-spacing:1.55px;">2025-12-31 17:54:57</div>
<div class="t" style="left:1139.70px;top:136.94px;font-size:34.51px;line-height:41.41px;color:#3a3a3a;font-weight:400;font-family:'Liberation Sans', sans-serif;letter-spacing:1.55px;">2026-03-01 07:32:42</div>
<div class="t" style="left:1918.70px;top:136.94px;font-size:34.51px;line-height:41.41px;color:#3a3a3a;font-weight:400;font-family:'Liberation Sans', sans-serif;letter-spacing:1.5px;">-1</div>
<div class="t" style="left:2048.70px;top:136.94px;font-size:34.51px;line-height:41.41px;color:#3a3a3a;font-weight:400;font-family:'Liberation Sans', sans-serif;letter-spacing:4.5px;">-2</div>
<div class="t" style="left:27.90px;top:244.14px;font-size:34.51px;line-height:41.41px;color:#3a3a3a;font-weight:400;font-family:'Liberation Sans', sans-serif;letter-spacing:0.6px;">wafer_0_0</div>
<div class="t" style="left:289.20px;top:244.14px;font-size:34.51px;line-height:41.41px;color:#3a3a3a;font-weight:400;font-family:'Liberation Sans', sans-serif;letter-spacing:1.1px;">die_(-1::-2)</div>
<div class="t" style="left:518.20px;top:244.14px;font-size:34.51px;line-height:41.41px;color:#3a3a3a;font-weight:400;font-family:'Liberation Sans', sans-serif;letter-spacing:0.8px;">lot_0</div>
<div class="t" style="left:727.20px;top:244.14px;font-size:34.51px;line-height:41.41px;color:#3a3a3a;font-weight:400;font-family:'Liberation Sans', sans-serif;letter-spacing:1.55px;">2025-12-31 17:54:57</div>
<div class="t" style="left:1139.70px;top:244.14px;font-size:34.51px;line-height:41.41px;color:#3a3a3a;font-weight:400;font-family:'Liberation Sans', sans-serif;letter-spacing:1.55px;">2026-03-01 07:32:42</div>
<div class="t" style="left:1918.70px;top:244.14px;font-size:34.51px;line-height:41.41px;color:#3a3a3a;font-weight:400;font-family:'Liberation Sans', sans-serif;letter-spacing:1.5px;">-1</div>
<div class="t" style="left:2048.70px;top:244.14px;font-size:34.51px;line-height:41.41px;color:#3a3a3a;font-weight:400;font-family:'Liberation Sans', sans-serif;letter-spacing:4.5px;">-2</div>
<div class="t" style="left:27.90px;top:351.34px;font-size:34.51px;line-height:41.41px;color:#3a3a3a;font-weight:400;font-family:'Liberation Sans', sans-serif;letter-spacing:0.6px;">wafer_0_0</div>
<div class="t" style="left:289.20px;top:351.34px;font-size:34.51px;line-height:41.41px;color:#3a3a3a;font-weight:400;font-family:'Liberation Sans', sans-serif;letter-spacing:1.1px;">die_(-1::0)</div>
<div class="t" style="left:518.20px;top:351.34px;font-size:34.51px;line-height:41.41px;color:#3a3a3a;font-weight:400;font-family:'Liberation Sans', sans-serif;letter-spacing:0.8px;">lot_0</div>
<div class="t" style="left:727.20px;top:351.34px;font-size:34.51px;line-height:41.41px;color:#3a3a3a;font-weight:400;font-family:'Liberation Sans', sans-serif;letter-spacing:1.55px;">2025-12-31 17:54:58</div>
<div class="t" style="left:1139.70px;top:351.34px;font-size:34.51px;line-height:41.41px;color:#3a3a3a;font-weight:400;font-family:'Liberation Sans', sans-serif;letter-spacing:1.55px;">2026-03-01 07:32:42</div>
<div class="t" style="left:1918.70px;top:351.34px;font-size:34.51px;line-height:41.41px;color:#3a3a3a;font-weight:400;font-family:'Liberation Sans', sans-serif;letter-spacing:1.5px;">-1</div>
<div class="t" style="left:2048.70px;top:351.34px;font-size:34.51px;line-height:41.41px;color:#3a3a3a;font-weight:400;font-family:'Liberation Sans', sans-serif;letter-spacing:4.5px;">0</div>
<div class="t" style="left:27.90px;top:458.54px;font-size:34.51px;line-height:41.41px;color:#3a3a3a;font-weight:400;font-family:'Liberation Sans', sans-serif;letter-spacing:0.6px;">wafer_0_0</div>
<div class="t" style="left:289.20px;top:458.54px;font-size:34.51px;line-height:41.41px;color:#3a3a3a;font-weight:400;font-family:'Liberation Sans', sans-serif;letter-spacing:1.1px;">die_(-1::0)</div>
<div class="t" style="left:518.20px;top:458.54px;font-size:34.51px;line-height:41.41px;color:#3a3a3a;font-weight:400;font-family:'Liberation Sans', sans-serif;letter-spacing:0.8px;">lot_0</div>
<div class="t" style="left:727.20px;top:458.54px;font-size:34.51px;line-height:41.41px;color:#3a3a3a;font-weight:400;font-family:'Liberation Sans', sans-serif;letter-spacing:1.55px;">2025-12-31 17:54:58</div>
<div class="t" style="left:1139.70px;top:458.54px;font-size:34.51px;line-height:41.41px;color:#3a3a3a;font-weight:400;font-family:'Liberation Sans', sans-serif;letter-spacing:1.55px;">2026-03-01 07:32:42</div>
<div class="t" style="left:1918.70px;top:458.54px;font-size:34.51px;line-height:41.41px;color:#3a3a3a;font-weight:400;font-family:'Liberation Sans', sans-serif;letter-spacing:1.5px;">-1</div>
<div class="t" style="left:2048.70px;top:458.54px;font-size:34.51px;line-height:41.41px;color:#3a3a3a;font-weight:400;font-family:'Liberation Sans', sans-serif;letter-spacing:4.5px;">0</div>
</div>
<div style="left:2203.20px;top:1380.20px;width:34.00px;height:539.30px;background:#f8f8f8;border-left:3px solid #c4c4c8;border-bottom:2.5px solid #c4c4c8;box-sizing:border-box;"></div>
<svg style="left:2209.00px;top:1389.00px;" width="19.00" height="11.00" viewBox="0 0 19 11"><path d="M9.5 0 L19 11 H0 Z" fill="#c9c9ce"/></svg>
<div style="left:2209.00px;top:1415.50px;width:25.50px;height:31.50px;background:#c5c5ca;border-radius:13px;"></div>
<svg style="left:2209.00px;top:1891.50px;" width="19.00" height="11.00" viewBox="0 0 19 11"><path d="M9.5 11 L19 0 H0 Z" fill="#c9c9ce"/></svg>
<div style="left:95.50px;top:1925.00px;width:2103.50px;height:31.50px;background:#f8f8f8;border-top:2.6px solid #c4c4c8;border-right:2.6px solid #c4c4c8;box-sizing:border-box;"></div>
<svg style="left:100.50px;top:1933.00px;" width="12.50" height="18.00" viewBox="0 0 12.5 18"><path d="M0 9 L12.5 0 V18 Z" fill="#c9c9ce"/></svg>
<svg style="left:2167.50px;top:1933.00px;" width="12.50" height="18.00" viewBox="0 0 12.5 18"><path d="M12.5 9 L0 0 V18 Z" fill="#c9c9ce"/></svg>
<div style="left:1475.70px;top:1930.80px;width:660.00px;height:22.70px;background:#c6c6cb;border-radius:12px;"></div>
<div style="left:95.30px;top:2044.20px;width:312.00px;height:91.00px;border:3px solid #6562f3;border-radius:8px;"></div>
<div class="t" style="left:251.00px;transform:translateX(-50%);top:2066.81px;font-size:36.54px;line-height:43.85px;color:#6562f3;font-weight:400;font-family:'Liberation Sans', sans-serif;">Remove All</div>
<div style="left:438.00px;top:2044.20px;width:216.50px;height:91.00px;border:3px solid #6562f3;border-radius:8px;"></div>
<div class="t" style="left:546.50px;transform:translateX(-50%);top:2066.81px;font-size:36.54px;line-height:43.85px;color:#6562f3;font-weight:400;font-family:'Liberation Sans', sans-serif;">Retry</div>
<div style="left:2015.30px;top:2044.20px;width:221.50px;height:91.00px;border:2.5px solid #dcdcdc;border-radius:8px;"></div>
<div class="t" style="left:2125.50px;transform:translateX(-50%);top:2066.81px;font-size:36.54px;line-height:43.85px;color:#222;font-weight:400;font-family:'Liberation Sans', sans-serif;">Close</div>
</div>
</div>
</body></html>
